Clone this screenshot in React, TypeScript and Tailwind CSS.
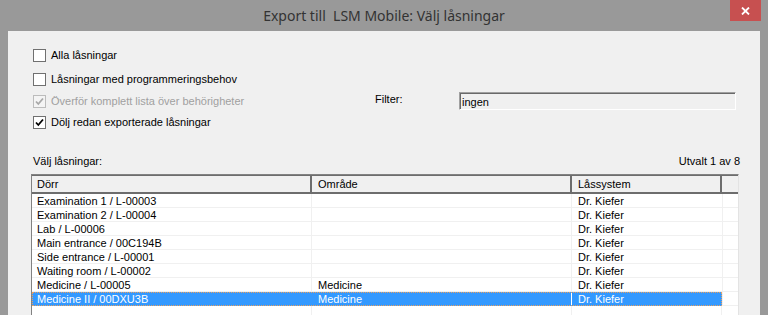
import React from "react";

interface LockRow {
    door: string;
    area: string;
    system: string;
}

const rows: LockRow[] = [
    { door: "Examination 1 / L-00003", area: "", system: "Dr. Kiefer" },
    { door: "Examination 2 / L-00004", area: "", system: "Dr. Kiefer" },
    { door: "Lab / L-00006", area: "", system: "Dr. Kiefer" },
    { door: "Main entrance / 00C194B", area: "", system: "Dr. Kiefer" },
    { door: "Side entrance / L-00001", area: "", system: "Dr. Kiefer" },
    { door: "Waiting room / L-00002", area: "", system: "Dr. Kiefer" },
    { door: "Medicine / L-00005", area: "Medicine", system: "Dr. Kiefer" },
    { door: "Medicine II / 00DXU3B", area: "Medicine", system: "Dr. Kiefer" },
];

const CheckBox = ({ checked, disabled }: { checked?: boolean; disabled?: boolean }) => (
    <div
        className={`w-[13px] h-[13px] border shrink-0 flex items-center justify-center ${
            disabled ? "border-[#bcbcbc] bg-[#f4f4f4]" : "border-[#707070] bg-white"
        }`}
    >
        {checked && (
            <svg width="9" height="9" viewBox="0 0 9 9">
                <path
                    d="M1 4.5 L3.3 7 L8 1.5"
                    fill="none"
                    stroke={disabled ? "#a8a8a8" : "#000"}
                    strokeWidth="1.8"
                />
            </svg>
        )}
    </div>
);

const CheckRow = ({ label, checked, disabled }: { label: string; checked?: boolean; disabled?: boolean }) => (
    <div className="flex items-center gap-[5px]">
        <CheckBox checked={checked} disabled={disabled} />
        <span className={disabled ? "text-[#a0a0a0]" : "text-black"}>{label}</span>
    </div>
);

export default function App() {
    return (
        <div className="w-[768px] h-[315px] overflow-hidden bg-[#999999] flex flex-col font-['Liberation_Sans',Arial,sans-serif] text-[11px] leading-[14px] text-black">
            {/* title bar */}
            <div className="h-[31px] shrink-0 grid grid-cols-[1fr_auto_1fr]">
                <div />
                <div className="flex items-center font-['Noto_Sans',sans-serif] text-[14px] text-[#333333] whitespace-pre">
                    Export till  LSM Mobile: Välj låsningar
                </div>
                <div className="flex justify-end items-start pr-[7px]">
                    <div className="w-[31px] h-[21px] bg-[#c75050] flex items-center justify-center">
                        <svg width="9" height="8" viewBox="0 0 9 8">
                            <path d="M1 0.5 L8 7.5 M8 0.5 L1 7.5" stroke="#fff" strokeWidth="1.8" />
                        </svg>
                    </div>
                </div>
            </div>

            {/* dialog body */}
            <div className="flex-1 mx-[8px] bg-[#f0f0f0] flex flex-col pt-[17px]">
                <div className="pl-[25px] flex flex-col">
                    <div className="h-[14px] flex items-center">
                        <CheckRow label="Alla låsningar" />
                    </div>
                    <div className="h-[14px] mt-[10px] flex items-center">
                        <CheckRow label="Låsningar med programmeringsbehov" />
                    </div>
                    <div className="h-[18px] mt-[6px] flex items-center">
                        <div className="w-[342px]">
                            <CheckRow label="Överför komplett lista över behörigheter" checked disabled />
                        </div>
                        <div className="w-[84px] -mt-[4px]">Filter:</div>
                        <div className="w-[277px] h-[18px] bg-[#f0f0f0] border border-t-[#a0a0a0] border-l-[#a0a0a0] border-r-white border-b-white flex items-center">
                            <div className="h-full w-full border-t border-l border-[#696969] pl-[1px] flex items-center">
                                ingen
                            </div>
                        </div>
                    </div>
                    <div className="h-[14px] mt-[5px] flex items-center">
                        <CheckRow label="Dölj redan exporterade låsningar" checked />
                    </div>
                    <div className="h-[14px] mt-[25px] w-[707px] flex justify-between items-center">
                        <span>Välj låsningar:</span>
                        <span>Utvalt 1 av 8</span>
                    </div>
                </div>

                {/* list view */}
                <div className="ml-[23px] mt-[6px] w-[708px] flex-1 border-t border-l border-[#828282] border-r border-r-[#e3e3e3] bg-white flex flex-col">
                    <div className="h-[19px] shrink-0 flex bg-[#f0f0f0] border-t border-[#6d6d6d] border-b-2 border-b-[#6d6d6d]">
                        <div className="w-[280px] border-r-2 border-[#6d6d6d] pl-[5px] flex items-center">Dörr</div>
                        <div className="w-[260px] border-r-2 border-[#6d6d6d] pl-[6px] flex items-center">Område</div>
                        <div className="w-[150px] border-r-2 border-[#6d6d6d] pl-[6px] flex items-center">Låssystem</div>
                        <div className="flex-1" />
                    </div>
                    {rows.map((row, index) => {
                        const selected = index === rows.length - 1;
                        return (
                            <div key={index} className="h-[14px] shrink-0 flex">
                                <div
                                    className={`w-[690px] flex ${
                                        selected
                                            ? "bg-[#3399ff] text-white outline-1 outline-dotted outline-[#e8a060] -outline-offset-1"
                                            : "border-b border-[#f0f0f0]"
                                    }`}
                                >
                                    <div className={`w-[280px] pl-[5px] ${selected ? "" : "border-r border-[#f0f0f0]"}`}>
                                        {row.door}
                                    </div>
                                    <div className={`w-[260px] pl-[6px] ${selected ? "border-r border-white" : "border-r border-[#f0f0f0]"}`}>
                                        {row.area}
                                    </div>
                                    <div className="w-[150px] pl-[6px]">{row.system}</div>
                                </div>
                                <div className="flex-1 border-l border-b border-[#f0f0f0]" />
                            </div>
                        );
                    })}
                    <div className="h-[14px] shrink-0 flex">
                        <div className="w-[280px] border-r border-[#f0f0f0]" />
                        <div className="w-[260px] border-r border-[#f0f0f0]" />
                        <div className="w-[150px] border-r border-[#f0f0f0]" />
                        <div className="flex-1" />
                    </div>
                </div>
            </div>
        </div>
    );
}
